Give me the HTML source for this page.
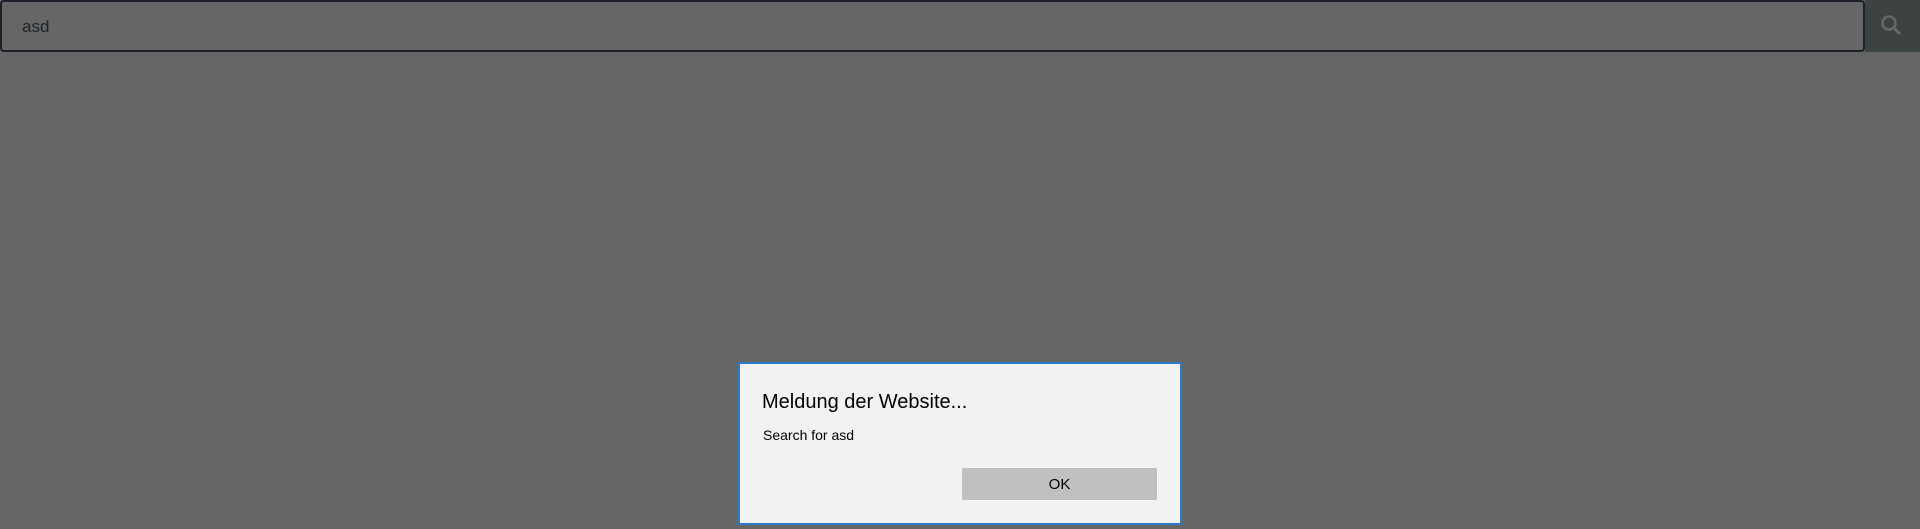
<!DOCTYPE html>
<html><head><style>
html,body{margin:0;padding:0;width:1920px;height:529px;background:#666;overflow:hidden;font-family:"Segoe UI","Liberation Sans",sans-serif;}
.inp{position:absolute;left:0;top:0;width:1861px;height:48px;border:2px solid #1b2029;border-radius:4px;background:#666;box-sizing:content-box;}
.inp span{position:absolute;left:20px;top:15px;font-size:17px;color:#1e232a;}
.btn{position:absolute;left:1865px;top:0;width:55px;height:52px;background:#3d4342;}
.dlg{position:absolute;left:738px;top:362px;width:440px;height:159px;border:2px solid #2b7bcc;background:#f2f2f2;}
.t{position:absolute;left:22px;top:27px;font-size:20px;color:#000;}
.b{position:absolute;left:23px;top:63px;font-size:14px;color:#000;}
.ok{position:absolute;left:222px;top:104px;width:195px;height:32px;background:#c0c0c0;font-size:15px;text-align:center;line-height:34px;color:#000;}
</style></head><body>
<div class="inp"><span>asd</span></div>
<div class="btn"><svg width="55" height="52"><circle cx="24" cy="23" r="6.5" fill="none" stroke="#656968" stroke-width="2.5"/><line x1="29" y1="28" x2="34" y2="33" stroke="#656968" stroke-width="3" stroke-linecap="round"/></svg></div>
<div class="dlg"><div class="t">Meldung der Website...</div><div class="b">Search for asd</div><div class="ok">OK</div></div>
</body></html>
